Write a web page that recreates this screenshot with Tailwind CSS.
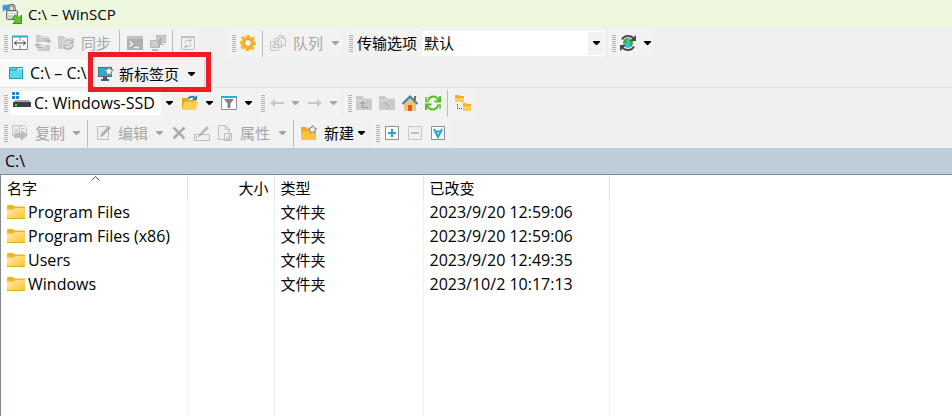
<!DOCTYPE html>
<html lang="zh-CN">
<head>
    <meta charset="UTF-8">
    <meta name="viewport" content="width=device-width, initial-scale=1.0">
    <title>C:\ – WinSCP</title>
    <script src="https://cdn.jsdelivr.net/npm/@tailwindcss/browser@4"></script>
</head>
<body class="h-screen flex flex-col overflow-hidden bg-[#efefef] text-black text-[15px] leading-5 font-['Open_Sans','Noto_Sans_CJK_SC',sans-serif]">

    <!-- Shared symbols -->
    <svg class="absolute size-0" aria-hidden="true">
        <symbol id="grip" viewBox="0 0 4 17"><path d="M0 .5h4M0 2.500h4M0 4.500h4M0 6.500h4M0 8.500h4M0 10.500h4M0 12.500h4M0 14.500h4M0 16.500h4" stroke="#b4b4b4"/></symbol>
        <symbol id="down" viewBox="0 0 7 4"><path d="M0 0h7v1L4 4H3L0 1z" fill="currentColor"/></symbol>
        <linearGradient id="fold" x2="1" y2="1"><stop stop-color="#ffeaa6"/><stop offset="1" stop-color="#fdc534"/></linearGradient>
        <symbol id="folder" viewBox="0 0 18 14">
            <path d="M0 1Q0 0 1 0h5l1.500 1.500H17q1 0 1 1V5H0z" fill="#fbb216"/>
            <path d="M0 4.500h6.500L8 3h10v11H0z" fill="url(#fold)"/>
            <path d="M0 13.500h18" stroke="#e9a820"/>
        </symbol>
    </svg>

    <!-- Title bar -->
    <header class="h-7 shrink-0 flex items-center gap-[6px] px-[2px] bg-[#edf7dd]">
        <svg class="size-5" viewBox="0 0 20 20">
            <path d="M.5 1 8 .5 6 3l2.500 2.500-3 3L3 6 .5 8z" fill="#2f9fe2" stroke="#bfe4f7" stroke-width=".5"/>
            <path d="M7 7V4q0-3 2.700-3t2.800 3v3" fill="none" stroke="#555" stroke-width="2.500"/>
            <path d="M7 7V4q0-3 2.700-3t2.800 3v3" fill="none" stroke="#d8d8d8"/>
            <rect x="4.500" y="6.500" width="11" height="9" rx="1" fill="#d0d2d2" stroke="#6a6a6a"/>
            <path d="M6 8.500h8M6 10.500h6" stroke="#efefef"/>
            <path d="M19.500 11v8.500H11l2.500-2.500-3-3 3-3 3 3z" fill="#5fc32f" stroke="#3b8f1b"/>
        </svg>
        <h1>C:\ – WinSCP</h1>
    </header>

    <!-- Main toolbar -->
    <div class="h-[30px] shrink-0 flex items-center text-[#a5a5a5]">
        <div class="h-[30px] flex items-center bg-[#f2f2f2]">
            <svg class="ml-1 w-1 h-[17px]"><use href="#grip"/></svg>
            <button aria-label="比较目录" class="w-[23px] flex justify-center">
                <svg class="size-4" viewBox="0 0 16 16"><path d="M.5 1.500h15v13H.5z" fill="#fff" stroke="#7d8388"/><path d="M8 1v5M8 10v5" stroke="#7d8388"/><path d="M0 1.500h16" stroke="#22aed0" stroke-width="2"/><path d="M2.500 8h11M5 5.500 2.500 8 5 10.500M11 5.500 13.500 8 11 10.500" fill="none" stroke="#333"/></svg>
            </button>
            <button aria-label="同步浏览" class="w-[23px] flex justify-center">
                <svg class="size-4" viewBox="0 0 16 16" fill="#c9c9c9"><path d="M1 0h4l1 1h7v6H1zM3 9h4l1 1h7v6H3z"/><path d="M6 3h9v3M12.500 4.500 15 7l1-2.500M10 12H1V9M0 11l1.500-2L4 11" fill="none" stroke="#f2f2f2" stroke-width="3"/><path d="M7 3.500h6.500V7M11 5l2.500 2.500L16 5M9 12.500H2.500V9M0 11l2.500-2.500L5 11" fill="none" stroke="#b5b5b5" stroke-width="1.500"/></svg>
            </button>
            <button aria-label="刷新目录" class="w-[23px] flex justify-center">
                <svg class="size-4" viewBox="0 0 16 16"><path d="M0 1h6l1 2h8v11H0z" fill="#cdcdcd"/><path d="M6 8q1-3 5-3 3 0 4 3M15 4v4h-4M15 10q-1 4-5 4-3 0-4-3M6 14v-4h4" fill="none" stroke="#ececec" stroke-width="3"/><path d="M6 8q1-3 5-3 3 0 4 3M15 4v4h-4M15 10q-1 4-5 4-3 0-4-3M6 14v-4h4" fill="none" stroke="#b5b5b5" stroke-width="1.500"/></svg>
            </button>
            <button class="w-[39px] pl-1 text-left">同步</button>
            <span class="mx-[3px] w-px h-[27px] bg-[#bcbcbc]"></span>
            <button aria-label="终端" class="w-[23px] flex justify-center">
                <svg class="size-4" viewBox="0 0 16 16"><path d="M0 1h16v14H0z" fill="#b0b0b0"/><path d="M0 2.500h16" stroke="#c8c8c8" stroke-width="2"/><path d="m2.500 6.500 3 2.500-3 2.500M7 12.500h5" fill="none" stroke="#f5f5f5" stroke-width="1.500"/></svg>
            </button>
            <button aria-label="PuTTY" class="w-[23px] flex justify-center">
                <svg class="size-4" viewBox="0 0 16 16"><path d="M6 0h10v8H6zM0 5h10v8H0zM2 14h6v2H2zM10 9h4v1h-4z" fill="#b8b8b8"/><path d="M7 1h8v6H7zM1 6h7v6H1z" fill="#cecece"/><path d="m10 3-3 5h3l-3 5 6-6h-3l3-4z" fill="#aaa"/></svg>
            </button>
            <span class="mx-[3px] w-px h-[27px] bg-[#bcbcbc]"></span>
            <button aria-label="同步目录" class="w-[23px] flex justify-center">
                <svg class="size-4" viewBox="0 0 16 16" fill="none" stroke="#c0c0c0"><path d="M1.500 1.500h13v13h-13z"/><path d="M1 2h14" stroke-width="2"/><path d="M4.500 8q0-2.500 3.500-2.500h3M9 3.500l2.500 2L9 7.500M11.500 8.500q0 3-3.500 3H5M7.500 9.500l-3 2 3 2"/></svg>
            </button>
        </div>
        <div class="ml-[29px] h-[30px] flex items-center bg-[#f2f2f2]">
            <svg class="ml-1 w-1 h-[17px]"><use href="#grip"/></svg>
            <button aria-label="选项" class="w-[23px] flex justify-center">
                <svg class="size-4" viewBox="0 0 16 16"><path d="M6.500 0h3l.5 2 1.500.6 2-1.100 1.500 2-1 1.800.5 1.200 1.500.5v3l-2 .5-.6 1.300 1 1.800-2 1.600-1.700-1-1.200.5-.5 1.800h-3L5.500 14l-1.300-.5-1.700 1-2-2 1-1.700L1 9.500l-1-.5V6.500L1.500 6l.6-1.500-1-1.700 2-1.700 1.700 1L6 1.700z" fill="#f5b62a"/><circle cx="8" cy="8" r="3.500" fill="#f2f2f2" stroke="#dd9818"/></svg>
            </button>
            <span class="mx-[3px] w-px h-[27px] bg-[#bcbcbc]"></span>
            <button aria-label="显示队列" class="w-[23px] flex justify-center">
                <svg class="size-4" viewBox="0 0 16 16" fill="#efefef" stroke="#c6c6c6"><path d="M8.500.5h4l3 3v7h-7zM4.500 3.500h4l3 3v6h-7zM.5 6.500h5l3 3v6h-8z"/><path d="M12.500.5v3h3M5.500 6.500v3h3M2 10.500h3M2 12.500h5M6 5.500h2M10 2.500h2" fill="none"/></svg>
            </button>
            <button class="w-[39px] pl-1 text-left">队列</button>
            <button aria-label="队列菜单" class="w-[15px] flex justify-center"><svg class="w-[7px] h-1"><use href="#down"/></svg></button>
        </div>
        <div class="ml-[2px] h-[30px] flex items-center bg-[#f2f2f2] text-black">
            <svg class="ml-1 w-1 h-[17px]"><use href="#grip"/></svg>
            <label for="transfer" class="w-[69px] pl-1">传输选项</label>
            <div class="relative w-[183px] h-[25px]">
                <select id="transfer" class="appearance-none w-full h-full pl-[2px] bg-white outline-none">
                    <option>默认</option>
                </select>
                <span class="absolute right-px top-px w-4 h-[23px] bg-[#f2f2f2] flex items-center justify-center pointer-events-none"><svg class="w-[7px] h-1"><use href="#down"/></svg></span>
            </div>
        </div>
        <div class="ml-[3px] h-[30px] flex items-center bg-[#f2f2f2] text-black">
            <svg class="ml-1 w-1 h-[17px]"><use href="#grip"/></svg>
            <button aria-label="重新连接" class="w-[23px] flex justify-center">
                <svg class="size-4" viewBox="0 0 16 16"><circle cx="8" cy="8" r="5" fill="#37c0e8"/><path d="M4 5q2-2.500 4-2l-1 3-1 3-3-1zM9 5l3-1 1 4-2 4-2-1 1-3z" fill="#4cae25"/><path d="M2 4.500Q4 1 8 1q4 0 6 3M14 11.500Q12 15 8 15q-4 0-6-3" fill="none" stroke="#45484b" stroke-width="2"/><path d="M16 0v6h-6zM0 16v-6h6z" fill="#45484b"/></svg>
            </button>
            <button aria-label="会话菜单" class="w-4 flex justify-center"><svg class="w-[7px] h-1"><use href="#down"/></svg></button>
        </div>
    </div>

    <!-- Session tabs -->
    <nav class="relative h-[30px] shrink-0 flex items-stretch border-b border-[#e4e4e4]">
        <button class="w-[93px] pl-2 mt-px flex items-center gap-[6px] bg-[#fafafa] text-base leading-5 whitespace-nowrap">
            <svg class="size-4" viewBox="0 0 16 16"><path d="M1.500 2.500h13v11h-13z" fill="#5fd9ef" stroke="#169cb8"/><path d="M1 5h7l1-2h6" fill="none" stroke="#169cb8"/><path d="M9.500 3h5v1.500H9z" fill="#c8f2f9"/></svg>
            C:\ – C:\
        </button>
        <button class="w-28 pl-[5px] mt-[2px] flex items-center border-r border-[#d5d5d5] bg-[#f2f2f2] whitespace-nowrap">
            <svg class="size-4 mr-[5px]" viewBox="0 0 16 16"><path d="M0 1h14v10H0z" fill="#5a6970"/><path d="M1 2h12v8H1z" fill="#27aed2"/><path d="M5 11h4v2h2v2H3v-2h2z" fill="#505b61"/><path d="m11 .5 1.300 3 3.200.4-2.400 2.200.6 3.200L11 7.700 8.200 9.300l.6-3.200-2.300-2.200 3.200-.4z" fill="#f7f7f7" stroke="#7c858a"/></svg>
            新标签页
            <svg class="ml-[9px] w-[7px] h-1"><use href="#down"/></svg>
        </button>
        <div class="absolute left-[88px] -top-[6px] w-[123px] h-10 border-[5px] border-[#ed1c24] pointer-events-none z-10"></div>
    </nav>

    <!-- Drive and navigation toolbar -->
    <div class="h-[30px] shrink-0 flex items-center">
        <div class="h-[30px] flex items-center bg-[#f2f2f2]">
            <svg class="ml-1 w-1 h-[17px]"><use href="#grip"/></svg>
            <div class="relative ml-[2px] w-[167px] h-6">
                <select aria-label="驱动器" class="appearance-none w-full h-full pl-6 bg-white text-base leading-5 outline-none">
                    <option>C: Windows-SSD</option>
                </select>
                <svg class="absolute left-[2px] top-px w-5 h-4 pointer-events-none" viewBox="0 0 20 16"><path d="M0 0h3v3H0zM4 0h3v3H4zM0 4h3v3H0zM4 4h3v3H4z" fill="#1787dd"/><path d="M3 8h14l2 3H1z" fill="#a3a7a9"/><path d="M1 10h18v5H1z" fill="#3c4145"/><path d="M3 12h2v2H3z" fill="#35e04b"/></svg>
                <span class="absolute right-0 top-0 w-4 h-full bg-[#f2f2f2] flex items-center justify-center pointer-events-none"><svg class="w-[7px] h-1"><use href="#down"/></svg></span>
            </div>
            <button aria-label="打开目录" class="ml-px w-[23px] flex justify-center">
                <svg class="size-4" viewBox="0 0 16 16"><path d="M0 3h5l1 2h8v10H0z" fill="#e8a51c"/><path d="m2 7 14-1-2 9H0z" fill="#fcd05a"/><path d="M6 4q3-4 7-1" fill="none" stroke="#2c83a7" stroke-width="2"/><path d="m15 0 0 5-5 0z" fill="#2c83a7"/></svg>
            </button>
            <button aria-label="打开菜单" class="w-4 flex justify-center"><svg class="w-[7px] h-1"><use href="#down"/></svg></button>
            <button aria-label="筛选" class="w-[23px] flex justify-center">
                <svg class="size-4" viewBox="0 0 16 16"><path d="M.5 1.500h15v13H.5z" fill="#fff" stroke="#8b9197"/><path d="M0 2h16" stroke="#25b0d5" stroke-width="2"/><path d="M3 4h10L9.500 8.500V13h-3V8.500z" fill="#7e8287"/></svg>
            </button>
            <button aria-label="筛选菜单" class="w-4 flex justify-center"><svg class="w-[7px] h-1"><use href="#down"/></svg></button>
        </div>
        <div class="ml-px h-[30px] flex items-center bg-[#f2f2f2] text-[#a5a5a5]">
            <svg class="ml-1 w-1 h-[17px]"><use href="#grip"/></svg>
            <button aria-label="后退" class="w-[23px] flex justify-center"><svg class="size-4" viewBox="0 0 16 16"><path d="m1 8 5-4v3h9v2H6v3z" fill="#c8c8c8"/></svg></button>
            <button aria-label="后退菜单" class="w-[15px] flex justify-center"><svg class="w-[7px] h-1"><use href="#down"/></svg></button>
            <button aria-label="前进" class="w-[23px] flex justify-center"><svg class="size-4" viewBox="0 0 16 16"><path d="m15 8-5-4v3H1v2h9v3z" fill="#c8c8c8"/></svg></button>
            <button aria-label="前进菜单" class="w-[15px] flex justify-center"><svg class="w-[7px] h-1"><use href="#down"/></svg></button>
        </div>
        <div class="ml-[3px] h-[30px] flex items-center bg-[#f2f2f2]">
            <svg class="ml-1 w-1 h-[17px]"><use href="#grip"/></svg>
            <button aria-label="上级目录" class="w-[23px] flex justify-center"><svg class="size-4" viewBox="0 0 16 16"><path d="M0 1h6l2 2h8v12H0z" fill="#cbcbcb"/><path d="M0 5.500h7l2-2h7" fill="none" stroke="#e2e2e2"/><path d="M12 12.500H6.500V7M4 9l2.500-2.500L9 9" fill="none" stroke="#9b9b9b"/></svg></button>
            <button aria-label="根目录" class="w-[23px] flex justify-center"><svg class="size-4" viewBox="0 0 16 16"><path d="M0 1h6l2 2h8v12H0z" fill="#cbcbcb"/><path d="M0 5.500h7l2-2h7" fill="none" stroke="#e2e2e2"/><path d="m6 7 4 5" stroke="#9b9b9b"/></svg></button>
            <button aria-label="主目录" class="w-[23px] flex justify-center"><svg class="size-4" viewBox="0 0 16 16"><path d="M2 7.500 8 2l6 5.500V16H2z" fill="#ecc27c"/><path d="M12 1h2v4h-2z" fill="#a0652e"/><path d="M6 10h4v6H6z" fill="#e05a1d"/><path d="M.5 9 8 1.500 15.500 9" fill="none" stroke="#2c87b4" stroke-width="2"/></svg></button>
            <button aria-label="刷新" class="w-[23px] flex justify-center"><svg class="size-4" viewBox="0 0 16 16"><path d="M3 5Q5 1.500 8.500 1.500 12 1.500 14 6M2 10q2 4.500 5.500 4.500Q11 14.500 13 11" fill="none" stroke="#58bd26" stroke-width="2"/><path d="M15 1v5.500H9.500M1 15V9.500h5.500" fill="none" stroke="#58bd26" stroke-width="2"/><path d="M1 2v4.500h3M15 14V10h-3" fill="none" stroke="#58bd26" stroke-width="1.500"/></svg></button>
            <span class="mx-[3px] w-px h-[27px] bg-[#bcbcbc]"></span>
            <button aria-label="目录树" class="w-[23px] flex justify-center"><svg class="size-4" viewBox="0 0 16 16"><path d="M0 0h4l1 1h4v6H0zM8 8h3l1 1h4v7H8z" fill="#f2ae25"/><path d="M0 3h9v4H0zM8 11h8v5H8z" fill="#fbcc58"/><path d="M2.500 9v5M2 13.500h5" fill="none" stroke="#444" stroke-dasharray="1 1"/></svg></button>
        </div>
    </div>

    <!-- File operations toolbar -->
    <div class="h-[30px] shrink-0 flex items-center text-[#a5a5a5]">
        <div class="h-[30px] flex items-center bg-[#f2f2f2]">
            <svg class="ml-1 w-1 h-[17px]"><use href="#grip"/></svg>
            <button aria-label="复制文件" class="w-[23px] flex justify-center"><svg class="size-4" viewBox="0 0 16 16"><path d="M.5.5h5l2 2v8h-7zM7.500.5h5l2 2v6h-7z" fill="#eee" stroke="#c3c3c3"/><path d="M2 4.500h4M2 6.500h4M9 3.500h3" stroke="#c3c3c3"/><path d="M2 8h7V5l7 5-7 6v-3H2z" fill="#bdbdbd"/></svg></button>
            <button class="w-[38px] pl-1 text-left">复制</button>
            <button aria-label="复制菜单" class="w-[15px] flex justify-center"><svg class="w-[7px] h-1"><use href="#down"/></svg></button>
            <span class="mx-[3px] w-px h-[27px] bg-[#bcbcbc]"></span>
            <button aria-label="编辑文件" class="w-[23px] flex justify-center"><svg class="size-4" viewBox="0 0 16 16"><path d="M2.500 1.500h11v13h-11z" fill="#eee" stroke="#bdbdbd"/><path d="m5 12 1-3 7.500-8L16 3l-8 8z" fill="#b0b0b0"/></svg></button>
            <button class="w-[38px] pl-1 text-left">编辑</button>
            <button aria-label="编辑菜单" class="w-[15px] flex justify-center"><svg class="w-[7px] h-1"><use href="#down"/></svg></button>
            <button aria-label="删除" class="w-[23px] flex justify-center"><svg class="size-4" viewBox="0 0 16 16"><path d="m2.500 2.500 11 11M13.500 2.500l-11 11" stroke="#adadad" stroke-width="2.500"/></svg></button>
            <button aria-label="重命名" class="w-[23px] flex justify-center"><svg class="size-4" viewBox="0 0 16 16"><path d="M.5 9.500h15v6H.5zM2.500 11v3" fill="#efefef" stroke="#bdbdbd"/><path d="m4 12 1-3 8-8 2 2-8 8z" fill="#bababa"/></svg></button>
            <button aria-label="文件属性" class="w-[23px] flex justify-center"><svg class="size-4" viewBox="0 0 16 16" fill="#efefef" stroke="#c0c0c0"><path d="M1.500.5h7l4 4v10h-11zM8.500.5v4h4M7.500 8.500h7v7h-7z"/><path d="m9 12 2 2 3-4" fill="none"/></svg></button>
            <button class="w-[39px] pl-1 text-left">属性</button>
            <button aria-label="属性菜单" class="w-[15px] flex justify-center"><svg class="w-[7px] h-1"><use href="#down"/></svg></button>
            <span class="mx-[3px] w-px h-[27px] bg-[#bcbcbc]"></span>
            <button aria-label="新建目录" class="w-[23px] flex justify-center"><svg class="size-4" viewBox="0 0 16 16"><path d="M0 2h5l1 2h9v11H0z" fill="#efa71f"/><path d="M0 6.500h6l2-1h7V15H0z" fill="#fcc43b"/><path d="m11.500 0 1.200 3 3.100.3-2.300 2.100.7 3-2.700-1.600-2.700 1.600.7-3L7.200 3.300l3.100-.3z" fill="#f5f5f5" stroke="#85898d"/></svg></button>
            <button class="pl-1 text-left text-black flex items-center gap-1 pr-1">新建<svg class="w-[7px] h-1"><use href="#down"/></svg></button>
        </div>
        <div class="ml-[3px] h-[30px] flex items-center bg-[#f2f2f2]">
            <svg class="ml-1 w-1 h-[17px]"><use href="#grip"/></svg>
            <button aria-label="选择" class="w-[23px] flex justify-center"><svg class="size-4" viewBox="0 0 16 16"><path d="M1.500 1.500h13v13h-13z" fill="#fff" stroke="#8a9096"/><path d="M8 4v8M4 8h8" stroke="#21a6cd" stroke-width="2"/></svg></button>
            <button aria-label="取消选择" class="w-[23px] flex justify-center"><svg class="size-4" viewBox="0 0 16 16"><path d="M1.500 1.500h13v13h-13z" fill="#efefef" stroke="#c8c8c8"/><path d="M4 8h8" stroke="#c0c0c0" stroke-width="2"/></svg></button>
            <button aria-label="全选" class="w-[23px] flex justify-center"><svg class="size-4" viewBox="0 0 16 16"><path d="M1.500 1.500h13v13h-13z" fill="#fff" stroke="#8a9096"/><path d="m4 4 4 8 4-8M5 6.500h6" fill="none" stroke="#21a6cd" stroke-width="2"/></svg></button>
        </div>
    </div>

    <!-- Current path -->
    <div class="h-[26px] shrink-0 flex items-center px-[5px] bg-[#bfccda] text-base leading-5">C:\</div>

    <!-- File list -->
    <main class="flex-1 min-h-0 border-t border-l border-[#828790] bg-white">
        <table class="w-full h-full table-fixed border-collapse">
            <colgroup>
                <col class="w-[186px]"><col class="w-[87px]"><col class="w-[149px]"><col class="w-[186px]"><col>
            </colgroup>
            <thead>
                <tr class="h-[25px] text-left">
                    <th class="relative p-0 pl-[6px] font-normal border-r border-[#e5e5e5]">名字
                        <svg class="absolute left-[90px] top-px w-[9px] h-[5px]" viewBox="0 0 9 5"><path d="m.5 4.500 4-4 4 4" fill="none" stroke="#555"/></svg>
                    </th>
                    <th class="p-0 pr-[5px] font-normal text-right border-r border-[#e5e5e5]">大小</th>
                    <th class="p-0 pl-[6px] font-normal border-r border-[#e5e5e5]">类型</th>
                    <th class="p-0 pl-[6px] font-normal border-r border-[#e5e5e5]">已改变</th>
                    <th class="p-0"></th>
                </tr>
            </thead>
            <tbody>
                <tr class="h-6">
                    <td class="p-0 pl-[6px] border-r border-[#e9f1fa]"><div class="flex items-center gap-[3px] text-base leading-5"><svg class="w-[18px] h-[14px]"><use href="#folder"/></svg>Program Files</div></td>
                    <td class="p-0 border-r border-[#e9f1fa]"></td>
                    <td class="p-0 pl-[6px] border-r border-[#e9f1fa]">文件夹</td>
                    <td class="p-0 pl-[6px] border-r border-[#e9f1fa] text-base leading-5">2023/9/20 12:59:06</td>
                    <td class="p-0"></td>
                </tr>
                <tr class="h-6">
                    <td class="p-0 pl-[6px] border-r border-[#e9f1fa]"><div class="flex items-center gap-[3px] text-base leading-5"><svg class="w-[18px] h-[14px]"><use href="#folder"/></svg>Program Files (x86)</div></td>
                    <td class="p-0 border-r border-[#e9f1fa]"></td>
                    <td class="p-0 pl-[6px] border-r border-[#e9f1fa]">文件夹</td>
                    <td class="p-0 pl-[6px] border-r border-[#e9f1fa] text-base leading-5">2023/9/20 12:59:06</td>
                    <td class="p-0"></td>
                </tr>
                <tr class="h-6">
                    <td class="p-0 pl-[6px] border-r border-[#e9f1fa]"><div class="flex items-center gap-[3px] text-base leading-5"><svg class="w-[18px] h-[14px]"><use href="#folder"/></svg>Users</div></td>
                    <td class="p-0 border-r border-[#e9f1fa]"></td>
                    <td class="p-0 pl-[6px] border-r border-[#e9f1fa]">文件夹</td>
                    <td class="p-0 pl-[6px] border-r border-[#e9f1fa] text-base leading-5">2023/9/20 12:49:35</td>
                    <td class="p-0"></td>
                </tr>
                <tr class="h-6">
                    <td class="p-0 pl-[6px] border-r border-[#e9f1fa]"><div class="flex items-center gap-[3px] text-base leading-5"><svg class="w-[18px] h-[14px]"><use href="#folder"/></svg>Windows</div></td>
                    <td class="p-0 border-r border-[#e9f1fa]"></td>
                    <td class="p-0 pl-[6px] border-r border-[#e9f1fa]">文件夹</td>
                    <td class="p-0 pl-[6px] border-r border-[#e9f1fa] text-base leading-5">2023/10/2 10:17:13</td>
                    <td class="p-0"></td>
                </tr>
                <!-- Filler row keeps the column lines running to the bottom -->
                <tr class="h-full">
                    <td class="p-0 border-r border-[#e9f1fa]"></td>
                    <td class="p-0 border-r border-[#e9f1fa]"></td>
                    <td class="p-0 border-r border-[#e9f1fa]"></td>
                    <td class="p-0 border-r border-[#e9f1fa]"></td>
                    <td class="p-0"></td>
                </tr>
            </tbody>
        </table>
    </main>

</body>
</html>
